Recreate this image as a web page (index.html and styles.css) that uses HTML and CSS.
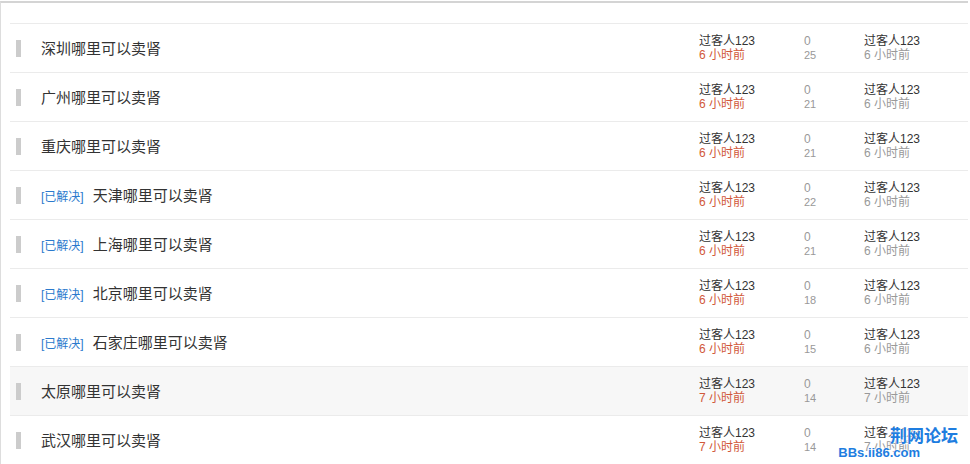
FILE: index.html
```html
<!DOCTYPE html>
<html lang="zh-CN">
<head>
    <meta charset="UTF-8">
    <title>帖子列表</title>
    <link rel="stylesheet" href="styles.css">
</head>
<body>
    <div class="board">
        <div class="thread-list">
            <div class="thread">
                <span class="mark"></span>
                <div class="subject"><a href="#">深圳哪里可以卖肾</a></div>
                <div class="author"><div>过客人123</div><div class="red">6 小时前</div></div>
                <div class="num"><div>0</div><div>25</div></div>
                <div class="last"><div>过客人123</div><div class="gray">6 小时前</div></div>
            </div>
            <div class="thread">
                <span class="mark"></span>
                <div class="subject"><a href="#">广州哪里可以卖肾</a></div>
                <div class="author"><div>过客人123</div><div class="red">6 小时前</div></div>
                <div class="num"><div>0</div><div>21</div></div>
                <div class="last"><div>过客人123</div><div class="gray">6 小时前</div></div>
            </div>
            <div class="thread">
                <span class="mark"></span>
                <div class="subject"><a href="#">重庆哪里可以卖肾</a></div>
                <div class="author"><div>过客人123</div><div class="red">6 小时前</div></div>
                <div class="num"><div>0</div><div>21</div></div>
                <div class="last"><div>过客人123</div><div class="gray">6 小时前</div></div>
            </div>
            <div class="thread">
                <span class="mark"></span>
                <div class="subject"><span class="tag">[已解决]</span><a href="#">天津哪里可以卖肾</a></div>
                <div class="author"><div>过客人123</div><div class="red">6 小时前</div></div>
                <div class="num"><div>0</div><div>22</div></div>
                <div class="last"><div>过客人123</div><div class="gray">6 小时前</div></div>
            </div>
            <div class="thread">
                <span class="mark"></span>
                <div class="subject"><span class="tag">[已解决]</span><a href="#">上海哪里可以卖肾</a></div>
                <div class="author"><div>过客人123</div><div class="red">6 小时前</div></div>
                <div class="num"><div>0</div><div>21</div></div>
                <div class="last"><div>过客人123</div><div class="gray">6 小时前</div></div>
            </div>
            <div class="thread">
                <span class="mark"></span>
                <div class="subject"><span class="tag">[已解决]</span><a href="#">北京哪里可以卖肾</a></div>
                <div class="author"><div>过客人123</div><div class="red">6 小时前</div></div>
                <div class="num"><div>0</div><div>18</div></div>
                <div class="last"><div>过客人123</div><div class="gray">6 小时前</div></div>
            </div>
            <div class="thread">
                <span class="mark"></span>
                <div class="subject"><span class="tag">[已解决]</span><a href="#">石家庄哪里可以卖肾</a></div>
                <div class="author"><div>过客人123</div><div class="red">6 小时前</div></div>
                <div class="num"><div>0</div><div>15</div></div>
                <div class="last"><div>过客人123</div><div class="gray">6 小时前</div></div>
            </div>
            <div class="thread hover">
                <span class="mark"></span>
                <div class="subject"><a href="#">太原哪里可以卖肾</a></div>
                <div class="author"><div>过客人123</div><div class="red">7 小时前</div></div>
                <div class="num"><div>0</div><div>14</div></div>
                <div class="last"><div>过客人123</div><div class="gray">7 小时前</div></div>
            </div>
            <div class="thread">
                <span class="mark"></span>
                <div class="subject"><a href="#">武汉哪里可以卖肾</a></div>
                <div class="author"><div>过客人123</div><div class="red">7 小时前</div></div>
                <div class="num"><div>0</div><div>14</div></div>
                <div class="last"><div>过客人123</div><div class="gray">7 小时前</div></div>
            </div>
        </div>
        <!-- 水印 -->
        <div class="watermark">
            <div class="wm-name">荆网论坛</div>
            <div class="wm-url">BBs.ii86.com</div>
        </div>
    </div>
</body>
</html>
```

FILE: styles.css
```css
body {
    margin: 0;
    font-family: "Liberation Sans", Arial, "Noto Sans CJK SC", sans-serif;
    background: #fff;
    color: #333;
}
.board {
    position: relative;
    width: 968px;
    height: 464px;
    border-top: 2px solid #d4d4d4;
    border-left: 1px solid #ddd;
    margin-top: 1px;
    box-sizing: border-box;
    padding-top: 20px;
    overflow: hidden;
}
.thread-list {
    margin-left: 9px;
}
.thread {
    display: flex;
    align-items: center;
    height: 48px;
    border-top: 1px solid #ebebeb;
}
.thread.hover {
    background: #f7f7f7;
}
.mark {
    width: 5px;
    height: 17px;
    background: #ccc;
    margin-left: 6px;
    margin-right: 20px;
    flex: none;
}
.subject {
    flex: 1;
    font-size: 15px;
    margin-top: -2px;
}
.subject a {
    color: #333;
    text-decoration: none;
}
.tag {
    color: #2b7acd;
    font-size: 12px;
    margin-right: 9px;
}
.author, .num, .last {
    font-size: 12px;
    line-height: 14px;
}
.author {
    width: 105px;
}
.num {
    width: 60px;
    color: #999;
}
.num div:last-child {
    font-size: 11px;
}
.last {
    width: 104px;
}
.red {
    color: #d1583a;
}
.gray {
    color: #999;
}
.watermark {
    position: absolute;
    right: 10px;
    bottom: 5px;
    color: #1e7de0;
    font-family: "Noto Sans CJK SC", sans-serif;
    font-weight: bold;
    text-align: right;
    text-shadow: 0 0 2px #fff, 0 0 2px #fff;
}
.wm-name {
    font-size: 17px;
    line-height: 20px;
}
.wm-url {
    font-family: "Liberation Sans", Arial, sans-serif;
    font-size: 13px;
    line-height: 15px;
    margin-right: 38px;
}
```
